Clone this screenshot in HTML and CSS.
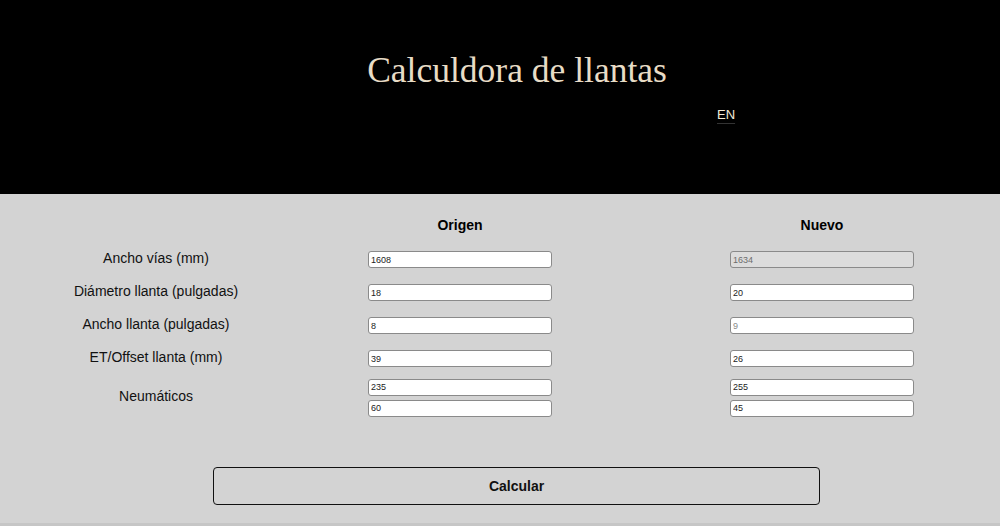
FILE: index.html
```html
<!DOCTYPE html>
<html lang="es">
<head>
  <meta charset="UTF-8">
  <title>Calculdora de llantas</title>
  <meta name="viewport" content="width=device-width, initial-scale=1">
  <link rel="stylesheet" href="styles.css">
</head>
<body>
  <header class="top">
    <h1>Calculdora de llantas</h1>
    <div class="lang-row">
      <a class="lang" href="#">EN</a>
    </div>
  </header>

  <main class="calc">
    <form id="calculator" class="grid">
      <div class="cell"></div>
      <div class="cell head">Origen</div>
      <div class="cell head right">Nuevo</div>

      <div class="cell label">Ancho vías (mm)</div>
      <div class="cell"><input type="text" value="1608"></div>
      <div class="cell right"><input type="text" value="1634" readonly class="ro"></div>

      <div class="cell label">Diámetro llanta (pulgadas)</div>
      <div class="cell"><input type="text" value="18"></div>
      <div class="cell right"><input type="text" value="20"></div>

      <div class="cell label">Ancho llanta (pulgadas)</div>
      <div class="cell"><input type="text" value="8"></div>
      <div class="cell right"><input type="text" placeholder="9"></div>

      <div class="cell label">ET/Offset llanta (mm)</div>
      <div class="cell"><input type="text" value="39"></div>
      <div class="cell right"><input type="text" value="26"></div>

      <div class="cell label">Neumáticos</div>
      <div class="cell stack">
        <input type="text" value="235">
        <input type="text" value="60">
      </div>
      <div class="cell right stack">
        <input type="text" value="255">
        <input type="text" value="45">
      </div>
    </form>

    <div class="actions">
      <button type="button">Calcular</button>
    </div>
  </main>
</body>
</html>
```

FILE: styles.css
```css
body {
  margin: 0;
  font-family: "Liberation Sans", Arial, sans-serif;
  background: #d3d3d3;
}

.top {
  background: #000;
  height: 194px;
  box-sizing: border-box;
  padding-top: 47px;
}

.top h1 {
  margin: 0;
  padding-left: 34px;
  text-align: center;
  font-family: "Liberation Serif", "Times New Roman", serif;
  font-weight: normal;
  font-size: 35.5px;
  line-height: 46px;
  color: #e8dcc6;
}

.lang-row {
  display: flex;
  margin-top: 14px;
  padding-left: 717px;
}

.lang {
  color: #f2ead8;
  font-size: 13px;
  text-decoration: underline;
  text-decoration-color: #333;
  text-underline-offset: 4px;
}

.calc {
  padding-top: 13px;
  border-bottom: 3px solid #c6c6c6;
}

.grid {
  display: grid;
  grid-template-columns: 312px 296px 1fr;
  grid-template-rows: 36px 33px 33px 33px 33px 45px;
  align-items: center;
  margin: 0;
}

.cell {
  display: flex;
  flex-direction: column;
  align-items: center;
}

.right {
  justify-self: start;
  width: 184px;
  margin-left: 122px;
}

.head {
  font-weight: bold;
  font-size: 14px;
}

.label {
  font-size: 14px;
  color: #111;
  margin-bottom: 4px;
}

.stack {
  gap: 4px;
}

input {
  box-sizing: border-box;
  width: 184px;
  height: 17px;
  padding: 0 2px;
  font-family: "Liberation Sans", Arial, sans-serif;
  font-size: 9px;
  color: #222;
  background: #fff;
  border: 1px solid #8a8a8a;
  border-radius: 3px;
}

input.ro {
  background: #dcdcdc;
  color: #6d6d6d;
}

input::placeholder {
  color: #8a8a8a;
}

.actions {
  display: flex;
  padding: 47px 0 18px 213px;
}

button {
  width: 607px;
  height: 38px;
  background: transparent;
  border: 1px solid #111;
  border-radius: 4px;
  font-family: "Liberation Sans", Arial, sans-serif;
  font-weight: bold;
  font-size: 14px;
  color: #111;
}
```
